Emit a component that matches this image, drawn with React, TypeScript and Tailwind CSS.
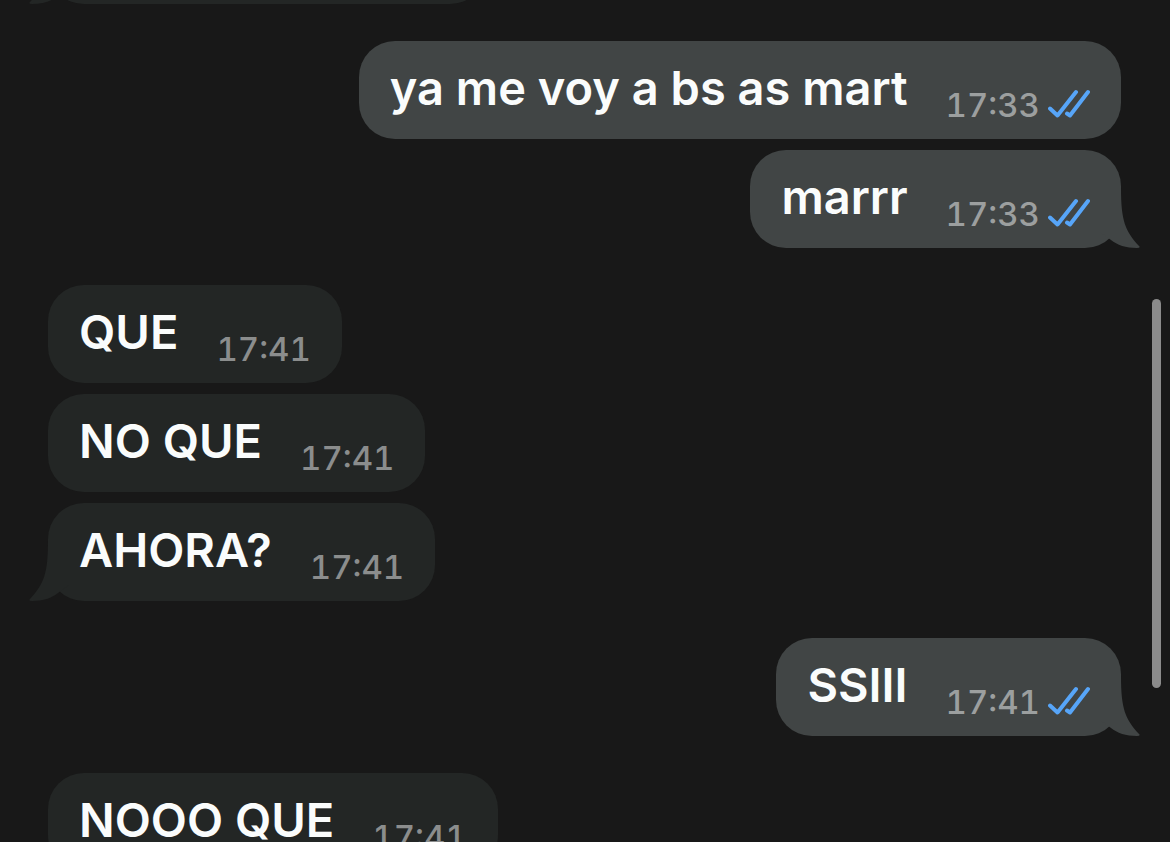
import { clsx } from 'clsx'

type Message = {
  text: string
  time: string
  mine?: boolean
  tail?: boolean
}

const GROUPS: Message[][] = [
  [
    { text: 'ya me voy a bs as mart', time: '17:33', mine: true },
    { text: 'marrr', time: '17:33', mine: true, tail: true },
  ],
  [
    { text: 'QUE', time: '17:41' },
    { text: 'NO QUE', time: '17:41' },
    { text: 'AHORA?', time: '17:41', tail: true },
  ],
  [{ text: 'SSIII', time: '17:41', mine: true, tail: true }],
  [{ text: 'NOOO QUE', time: '17:41' }],
]

function Tail({ mine }: { mine?: boolean }) {
  return (
    <svg
      viewBox="0 0 40 60"
      aria-hidden="true"
      className={clsx(
        'absolute bottom-0 h-[60px] w-10',
        mine ? '-right-[19px] fill-[#414545]' : '-left-[19px] -scale-x-100 fill-[#232625]',
      )}
    >
      <path d="M0 0H21C21 32 25 43 39 58Q41 60 37 60C26 60 17 57 11 52L0 44Z" />
    </svg>
  )
}

function ReadTicks() {
  return (
    <svg
      viewBox="0 0 42 30"
      role="img"
      aria-label="Leído"
      className="mb-0.5 ml-2 h-[30px] w-[42px] fill-none stroke-[#57a5f8] stroke-4"
      strokeLinecap="round"
      strokeLinejoin="round"
    >
      <path d="M2 19.5L9.5 26.5L28 3" />
      <path d="M19 24.5L22 26.5L40 3" />
    </svg>
  )
}

function Bubble({ text, time, mine, tail }: Message) {
  return (
    <li
      className={clsx(
        'relative flex h-[98px] w-fit items-start rounded-[36px] px-[31px] pt-[19px]',
        mine ? 'self-end bg-[#414545]' : 'self-start bg-[#232625]',
      )}
    >
      {tail && <Tail mine={mine} />}
      <p className="relative text-[47px] leading-[56px] font-semibold text-[#fafcfc]">{text}</p>
      <div className="relative mt-[25px] ml-[38px] flex items-center">
        <time
          className={clsx(
            'min-w-[94px] text-[33px] leading-10 font-medium tabular-nums',
            mine ? 'text-[#9c9f9f]' : 'text-[#8b8d8d]',
          )}
        >
          {time}
        </time>
        {mine && <ReadTicks />}
      </div>
    </li>
  )
}

export default function App() {
  return (
    <main className="relative h-screen overflow-hidden bg-[#181818] font-['Inter','Liberation_Sans',sans-serif]">
      {/* bottom edge of the message scrolled out of view */}
      <div className="flex h-1 items-end overflow-hidden pl-12">
        <div className="relative h-[98px] w-[438px] shrink-0 rounded-[36px] bg-[#232625]">
          <Tail />
        </div>
      </div>

      <div className="flex flex-col gap-[37px] pt-[37px] pr-[49px] pl-12">
        {GROUPS.map((group, i) => (
          <ul key={i} className="flex flex-col gap-[11px]">
            {group.map((message, j) => (
              <Bubble key={j} {...message} />
            ))}
          </ul>
        ))}
      </div>

      {/* scroll indicator */}
      <div className="absolute top-[299px] right-[9px] h-[389px] w-[9px] rounded-full bg-[#8b8b8b]" />
    </main>
  )
}
